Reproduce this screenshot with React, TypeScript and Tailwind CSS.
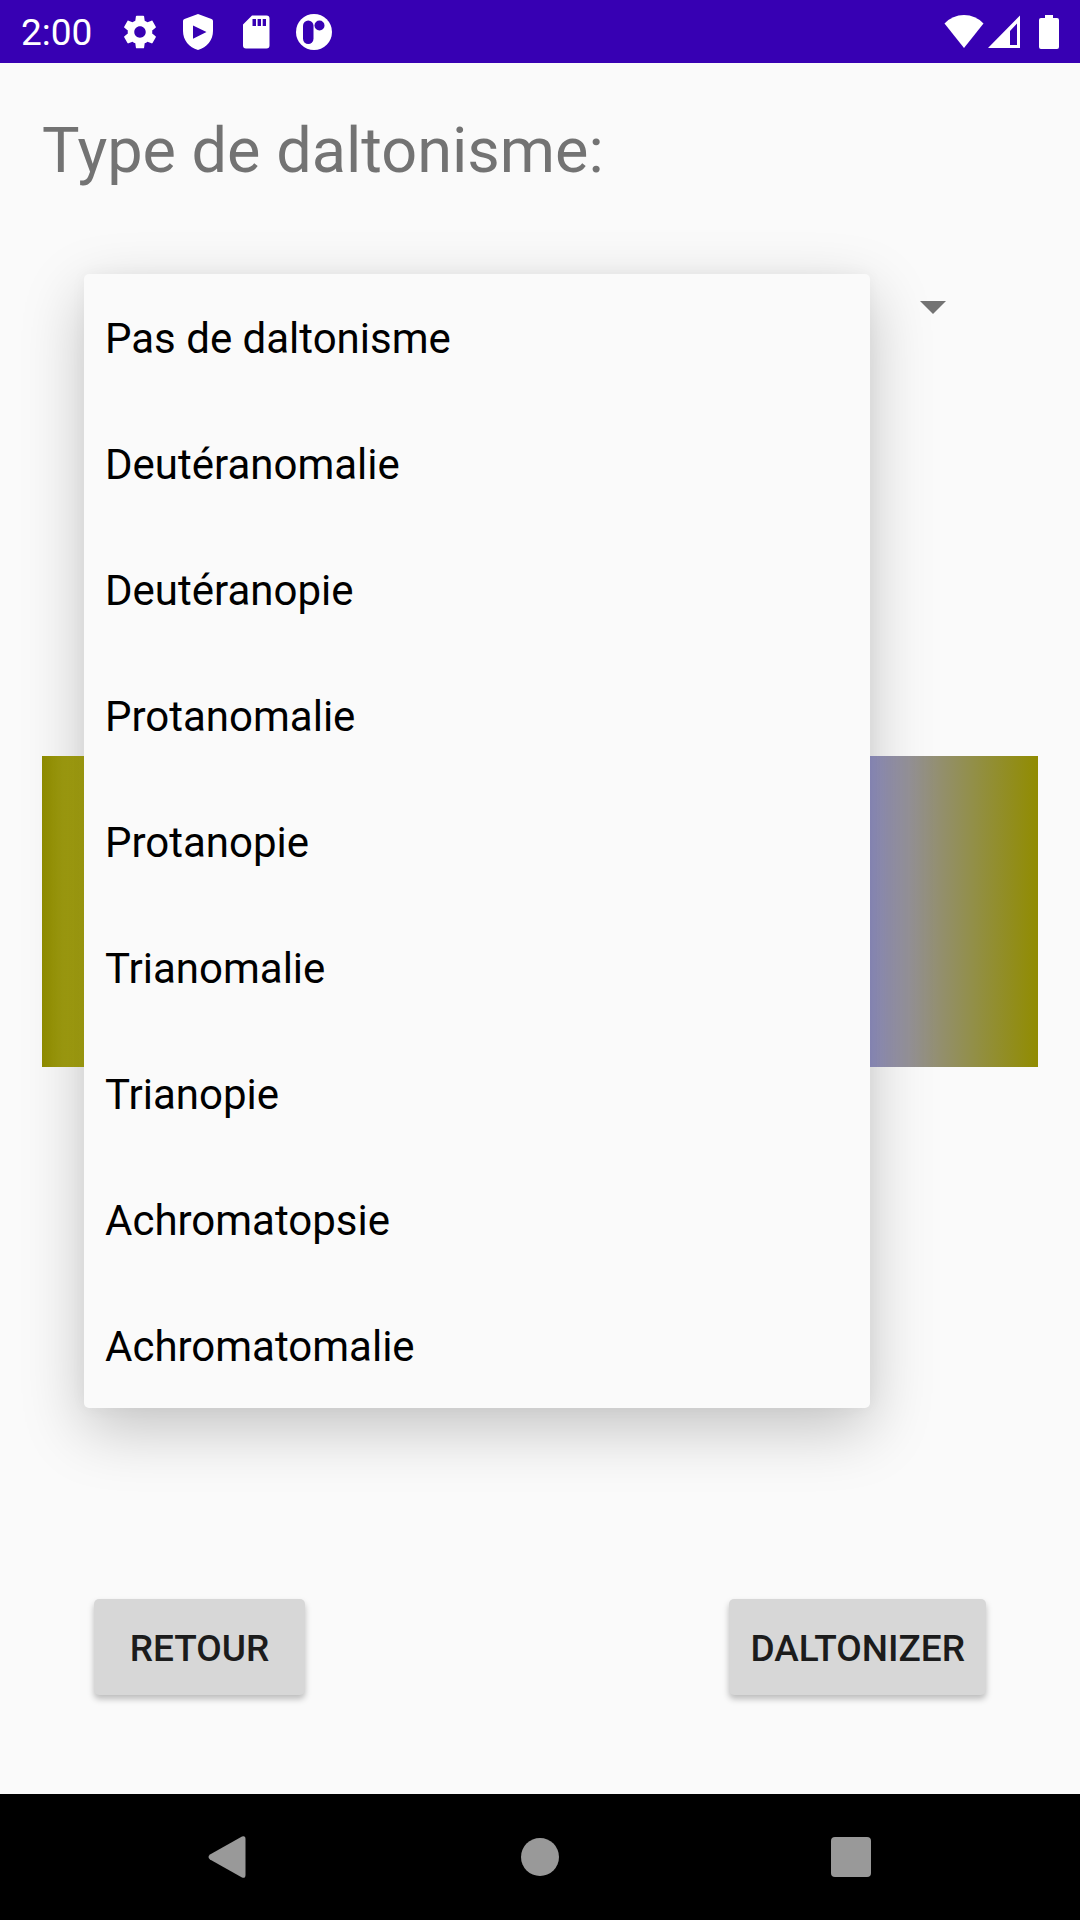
import { useState } from "react";

const TYPES = [
  "Pas de daltonisme",
  "Deutéranomalie",
  "Deutéranopie",
  "Protanomalie",
  "Protanopie",
  "Trianomalie",
  "Trianopie",
  "Achromatopsie",
  "Achromatomalie",
];

function StatusBar() {
  return (
    <header className="flex h-[63px] shrink-0 items-center justify-between bg-[#3700b3] px-[21px] text-white">
      <div className="flex items-center gap-[22px]">
        <span className="w-[79px] pt-0.5 text-[37px] leading-[44px]">2:00</span>
        <svg className="size-9" viewBox="1 1 22 22" fill="currentColor" aria-hidden="true">
          <path d="M19.43 12.98c.04-.32.07-.64.07-.98s-.03-.66-.07-.98l2.11-1.65c.19-.15.24-.42.12-.64l-2-3.46c-.12-.22-.39-.3-.61-.22l-2.49 1c-.52-.4-1.08-.73-1.69-.98l-.38-2.65C14.46 2.18 14.25 2 14 2h-4c-.25 0-.46.18-.49.42l-.38 2.65c-.61.25-1.17.59-1.69.98l-2.49-1c-.23-.09-.49 0-.61.22l-2 3.46c-.13.22-.07.49.12.64l2.11 1.65c-.04.32-.07.65-.07.98s.03.66.07.98l-2.11 1.65c-.19.15-.24.42-.12.64l2 3.46c.12.22.39.3.61.22l2.49-1c.52.4 1.08.73 1.69.98l.38 2.65c.03.24.24.42.49.42h4c.25 0 .46-.18.49-.42l.38-2.65c.61-.25 1.17-.59 1.69-.98l2.49 1c.23.09.49 0 .61-.22l2-3.46c.12-.22.07-.49-.12-.64l-2.11-1.65zM12 15.5c-1.93 0-3.5-1.57-3.5-3.5s1.57-3.5 3.5-3.5 3.5 1.57 3.5 3.5-1.57 3.5-3.5 3.5z" />
        </svg>
        <svg className="size-9" viewBox="0 0 36 36" fill="currentColor" fillRule="evenodd" aria-hidden="true">
          <path d="M18 0 31.500 5 Q33 5.600 33 7 V17 C33 26 27 33.500 18 36 C9 33.500 3 26 3 17 V7 Q3 5.600 4.500 5 Z M13 11.500 V24.800 L26.500 18 Z" />
        </svg>
        <svg className="size-9" viewBox="0 0 36 36" fill="currentColor" fillRule="evenodd" aria-hidden="true">
          <path d="M14 1.500 H28.500 Q31.500 1.500 31.500 4.500 V31.500 Q31.500 34.500 28.500 34.500 H8 Q5 34.500 5 31.500 V10.500 Z M14.500 5 V12 H18 V5 Z M19.600 5 V12 H23 V5 Z M24.700 5 V12 H28 V5 Z" />
        </svg>
        <svg className="size-9" viewBox="0 0 36 36" aria-hidden="true">
          <circle cx="18" cy="18" r="18" fill="currentColor" />
          <rect x="7" y="6.500" width="10.500" height="23.500" rx="5.250" fill="#3700b3" />
          <circle cx="23.500" cy="11.500" r="5" fill="#3700b3" />
        </svg>
      </div>
      <div className="flex items-center">
        <svg className="h-9 w-10" viewBox="0 0 40 36" fill="currentColor" aria-hidden="true">
          <path d="M20 34 0.500 9.500 Q8.500 1 20 1 T39.500 9.500 Z" />
        </svg>
        <svg className="ml-1 h-9 w-8" viewBox="0 0 32 36" fill="currentColor" fillRule="evenodd" aria-hidden="true">
          <path d="M32 1.500 V34 H0 Z M22 17 V31 H29 V9.500 Z" />
        </svg>
        <svg className="ml-[19px] h-9 w-5" viewBox="0 0 20 36" fill="currentColor" aria-hidden="true">
          <path d="M6 1 H14 V4 H18 Q20 4 20 6 V33 Q20 35 18 35 H2 Q0 35 0 33 V6 Q0 4 2 4 H6 Z" />
        </svg>
      </div>
    </header>
  );
}

function TypeSpinner() {
  const [open, setOpen] = useState(true);
  return (
    <div className="relative mx-[42px] mt-14">
      <button
        type="button"
        aria-label="Type de daltonisme"
        aria-expanded={open}
        onClick={() => setOpen(!open)}
        className="flex h-[126px] w-full items-center justify-end pr-[50px]"
      >
        <svg className="h-[13px] w-[26px]" viewBox="0 0 26 13" fill="#737373" aria-hidden="true">
          <path d="M0 0H26L13 13Z" />
        </svg>
      </button>
      {open && (
        <select
          id="type"
          size={TYPES.length}
          onChange={() => setOpen(false)}
          className="absolute top-[30px] right-[126px] left-0 z-10 h-[1134px] appearance-none overflow-hidden rounded-[5px] bg-[#fafafa] text-[42px] text-black shadow-[0_21px_63px_rgba(0,0,0,0.22),0_0_16px_rgba(0,0,0,0.04)] outline-none"
        >
          {TYPES.map((type) => (
            <option key={type} className="h-[126px] px-[21px] pt-10 pb-0">
              {type}
            </option>
          ))}
        </select>
      )}
    </div>
  );
}

function ActionButton({ label }: { label: string }) {
  return (
    <button
      type="button"
      className="h-24 min-w-[211px] rounded-[5px] bg-[#d7d7d7] px-[21px] pt-1 text-[37px] leading-[44px] font-medium text-[#1c1c1c] shadow-[0_4px_6px_rgba(0,0,0,0.25)]"
    >
      {label}
    </button>
  );
}

function NavBar() {
  return (
    <nav className="grid h-[126px] shrink-0 grid-cols-3 items-center justify-items-center bg-black px-[73px] text-[#999999]">
      <button type="button" aria-label="Précédent" className="flex size-24 items-center justify-center">
        <svg className="size-[42px]" viewBox="0 0 42 42" fill="currentColor" aria-hidden="true">
          <path d="M34 .5 Q37.500 -.8 37.500 3 V39 Q37.500 42.800 34 41.500 L2 23.500 Q-1 21 2 18.500 Z" />
        </svg>
      </button>
      <button type="button" aria-label="Accueil" className="flex size-24 items-center justify-center">
        <span className="size-[38px] rounded-full bg-[#999999]" />
      </button>
      <button type="button" aria-label="Applications récentes" className="flex size-24 items-center justify-center">
        <span className="size-10 rounded-[4px] bg-[#999999]" />
      </button>
    </nav>
  );
}

export default function App() {
  return (
    <div className="flex min-h-screen flex-col bg-[#fafafa] font-[Roboto,sans-serif]">
      <StatusBar />
      <main className="flex flex-1 flex-col px-[42px] pt-[51px]">
        <label htmlFor="type" className="text-[63px] leading-[74px] text-[#737373]">
          Type de daltonisme:
        </label>
        <TypeSpinner />
        <div
          role="img"
          aria-label="Dégradé de couleurs"
          className="mt-[386px] h-[311px] bg-[linear-gradient(90deg,#8f8c00_0%,#a09d0f_2%,#b0ad14_5%,#e0dc40_25%,#5a6ac8_55%,#9696cc_83%,#9593ae_85%,#959298_87%,#938f70_90%,#928f48_93.5%,#918c00_100%)]"
        />
        <div className="mx-[52px] mt-auto mb-[99px] flex items-center justify-between">
          <ActionButton label="RETOUR" />
          <ActionButton label="DALTONIZER" />
        </div>
      </main>
      <NavBar />
    </div>
  );
}
